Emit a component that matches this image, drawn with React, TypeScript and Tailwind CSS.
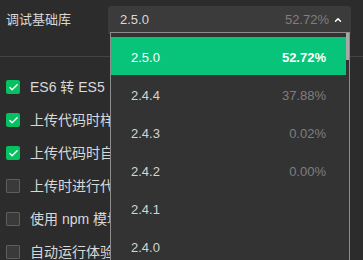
import { Check, ChevronUp } from "lucide-react";

const options = [
  { label: "ES6 转 ES5", checked: true },
  { label: "上传代码时样式自动补全", checked: true },
  { label: "上传代码时自动压缩混淆", checked: true },
  { label: "上传时进行代码保护", checked: false },
  { label: "使用 npm 模块", checked: false },
  { label: "自动运行体验评分", checked: false },
];

const versions = [
  { v: "2.5.0", p: "52.72%" },
  { v: "2.4.4", p: "37.88%" },
  { v: "2.4.3", p: "0.02%" },
  { v: "2.4.2", p: "0.00%" },
  { v: "2.4.1", p: "" },
  { v: "2.4.0", p: "" },
];

const App = () => {
  return (
    <div
      className="relative w-[363px] h-[260px] overflow-hidden bg-[#2c2c2c] text-[#d9d9d9]"
      style={{ fontFamily: '"Liberation Sans", "Noto Sans CJK SC", sans-serif' }}
    >
      <div className="flex items-start h-[57px] border-b border-[#444] pl-[6px] pt-[6px]">
        <span className="w-[102px] leading-[27px] text-[13px]">调试基础库</span>
        <div className="w-[243px] h-[28px] flex items-center rounded-t-[3px] bg-[#3b3b3b] pl-[12px] pr-[8px] text-[13px]">
          <span className="flex-1 text-[#d9d9d9]">2.5.0</span>
          <span className="text-[#7f7f7f]">52.72%</span>
          <ChevronUp className="ml-[4px] w-[10px] h-[10px] text-white" strokeWidth={3.5} />
        </div>
      </div>

      <div className="flex flex-col gap-[19px] pl-[6px] pt-[23px]">
        {options.map((o, i) => (
          <div className="flex items-center h-[14px]" key={i}>
            {o.checked ? (
              <div className="w-[14px] h-[14px] rounded-[2px] bg-[#07c160] flex items-center justify-center">
                <Check className="w-[11px] h-[11px] text-white" strokeWidth={3} />
              </div>
            ) : (
              <div className="w-[14px] h-[14px] rounded-[1px] border border-[#5e5e5e] bg-[#3a3a3a]" />
            )}
            <span className="ml-[10px] text-[14px] whitespace-nowrap">{o.label}</span>
          </div>
        ))}
      </div>

      <div className="absolute left-[110px] top-[32px] w-[240px] h-[240px] border border-[#8c8c8c] bg-[#333333] flex">
        <div className="flex-1 pt-[4px]">
          {versions.map((item, i) => (
            <div
              key={i}
              className={
                i === 0
                  ? "h-[38px] flex items-center justify-between px-[20px] bg-[#07c47a] text-white text-[13px] pt-[3px]"
                  : "h-[38px] flex items-center justify-between px-[20px] text-[#d4d4d4] text-[13px] pt-[3px]"
              }
            >
              <span>{item.v}</span>
              <span className={i === 0 ? "font-bold" : "text-[#7f7f7f]"}>{item.p}</span>
            </div>
          ))}
        </div>
        <div className="w-[3px]">
          <div className="h-[27px] bg-[#a8a8a8]" />
        </div>
      </div>
    </div>
  );
};

export default App;
